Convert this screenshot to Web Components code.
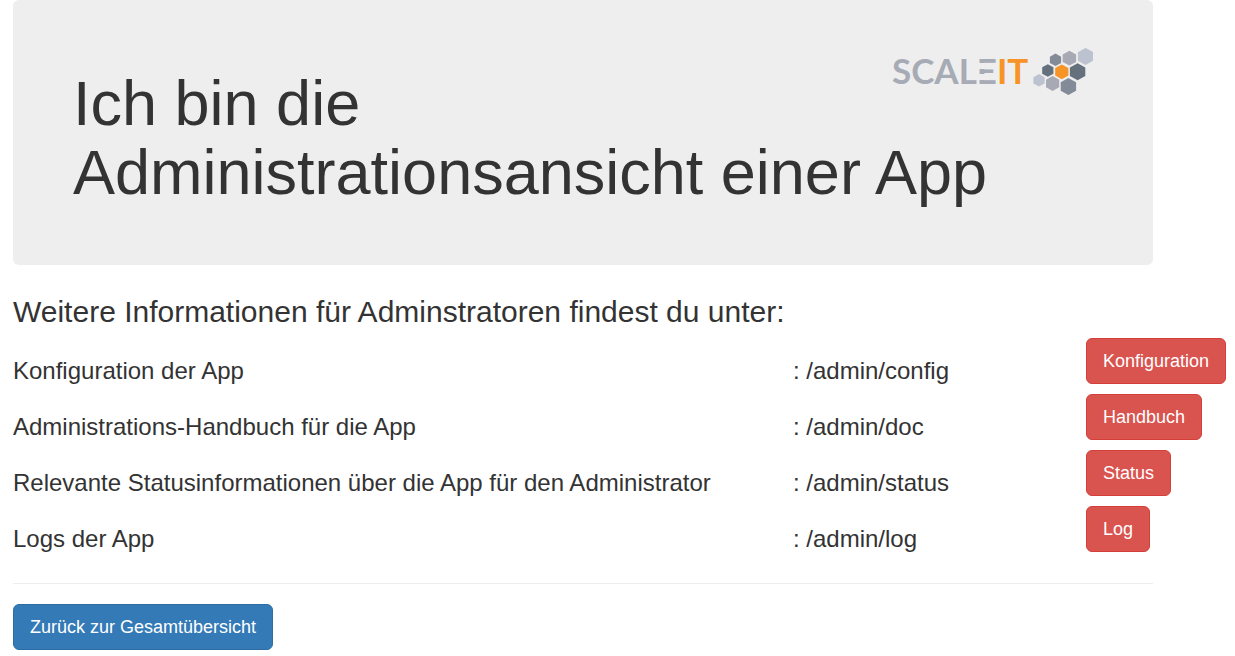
<!DOCTYPE html>
<html lang="de">
<head>
<meta charset="utf-8">
<meta name="viewport" content="width=device-width, initial-scale=1">
<title>Administrationsansicht</title>
<style>
  body { margin: 0; background: #fff; color: #333; font-family: "Liberation Sans", Arial, sans-serif; }
</style>
</head>
<body>
<admin-page>
  <admin-hero slot="hero">
    <scaleit-logo slot="logo"></scaleit-logo>
    Ich bin die Administrationsansicht einer App
  </admin-hero>
  <admin-links></admin-links>
  <action-button slot="footer" kind="primary">Zurück zur Gesamtübersicht</action-button>
</admin-page>

<template id="page-template">
  <style>
    :host { display: block; padding: 0 9px 6px 13px; }
    .inner { margin-right: 73px; }
    h2 { margin: 30px 0 10px; font-size: 30px; line-height: 33px; font-weight: 400; }
    hr { margin: 21px 0 20px; border: 0; border-top: 1px solid #eee; }
  </style>
  <main>
    <div class="inner"><slot name="hero"></slot></div>
    <h2>Weitere Informationen für Adminstratoren findest du unter:</h2>
    <slot></slot>
    <div class="inner"><hr></div>
    <slot name="footer"></slot>
  </main>
</template>

<template id="hero-template">
  <style>
    :host { display: block; padding: 48px 60px; background: #eee; border-radius: 6px; }
    ::slotted([slot="logo"]) { float: right; }
    h1 { margin: 21px 0 10px; font-size: 63px; line-height: 69px; font-weight: 400; }
  </style>
  <slot name="logo"></slot>
  <h1><slot></slot></h1>
</template>

<template id="logo-template">
  <style>
    :host { display: block; width: 201px; }
    svg { display: block; width: 100%; }
    text { font-family: Lato, sans-serif; font-size: 35px; font-weight: 700; }
  </style>
  <svg viewBox="0 0 201 47" role="img" aria-label="ScaleIT">
    <text x="0" y="36" fill="#a7abb5">SCALE<tspan fill="#f79428">IT</tspan></text>
    <!-- the stem of the E is left open between its bars -->
    <path fill="#eee" d="M85 15h20v6h-20zM85 26h20v6h-20z"/>
    <g class="cells"></g>
  </svg>
</template>

<template id="links-template">
  <style>
    :host { display: block; }
    table { width: 100%; table-layout: fixed; border-collapse: collapse; }
    .about { width: 64.3%; }
    .path { width: 24.15%; }
    th, td { padding: 0; text-align: left; vertical-align: top; font-weight: 400; }
    .text { padding: 20px 0 10px; font-size: 24px; line-height: 26px; }
  </style>
  <table>
    <colgroup><col class="about"><col class="path"><col></colgroup>
    <tbody></tbody>
  </table>
</template>

<template id="button-template">
  <style>
    :host { display: block; }
    button {
      display: block; margin: 0; padding: 10px 16px;
      border: 1px solid #d43f3a; border-radius: 6px; background: #d9534f; color: #fff;
      font-family: inherit; font-size: 18px; line-height: 24px; white-space: nowrap; cursor: pointer;
    }
    :host([kind="primary"]) button { background: #337ab7; border-color: #2e6da4; }
  </style>
  <button type="button"><slot></slot></button>
</template>

<script>
  class TemplateElement extends HTMLElement {
    constructor() {
      super();
      const template = document.getElementById(this.constructor.template);
      this.attachShadow({ mode: 'open' }).append(template.content.cloneNode(true));
    }
  }

  class AdminPage extends TemplateElement { static template = 'page-template'; }
  class AdminHero extends TemplateElement { static template = 'hero-template'; }
  class ActionButton extends TemplateElement { static template = 'button-template'; }

  class ScaleitLogo extends TemplateElement {
    static template = 'logo-template';
    // centre x, centre y, half width, half height, fill
    static cells = [
      [163.5, 11.8, 5.6, 6.3, '#838a98'],
      [177.4, 10.2, 6.7, 7.4, '#a7a9b4'],
      [193.6, 8.4, 7.7, 8.5, '#bcc2cf'],
      [155.8, 22.5, 5.6, 6.3, '#65707d'],
      [169.8, 23.8, 6.6, 7.4, '#f79428'],
      [185.6, 23.8, 7.7, 8.5, '#65707d'],
      [147, 32.3, 5.6, 6.3, '#bcc2cf'],
      [160.6, 35.5, 6.6, 7.4, '#a7a9b4'],
      [176.4, 38.4, 7.7, 8.5, '#838a98'],
    ];
    constructor() {
      super();
      this.shadowRoot.querySelector('.cells').innerHTML = ScaleitLogo.cells.map(([x, y, w, h, fill]) =>
        `<path fill="${fill}" d="M${x} ${y - h}L${x + w} ${y - h / 2}V${y + h / 2}L${x} ${y + h}L${x - w} ${y + h / 2}V${y - h / 2}Z"/>`
      ).join('');
    }
  }

  class AdminLinks extends TemplateElement {
    static template = 'links-template';
    static rows = [
      ['Konfiguration der App', '/admin/config', 'Konfiguration'],
      ['Administrations-Handbuch für die App', '/admin/doc', 'Handbuch'],
      ['Relevante Statusinformationen über die App für den Administrator', '/admin/status', 'Status'],
      ['Logs der App', '/admin/log', 'Log'],
    ];
    constructor() {
      super();
      this.shadowRoot.querySelector('tbody').innerHTML = AdminLinks.rows.map(([about, path, label]) =>
        `<tr><th scope="row" class="text">${about}</th><td class="text">: ${path}</td><td><action-button>${label}</action-button></td></tr>`
      ).join('');
    }
  }

  customElements.define('action-button', ActionButton);
  customElements.define('scaleit-logo', ScaleitLogo);
  customElements.define('admin-hero', AdminHero);
  customElements.define('admin-links', AdminLinks);
  customElements.define('admin-page', AdminPage);
</script>
</body>
</html>
